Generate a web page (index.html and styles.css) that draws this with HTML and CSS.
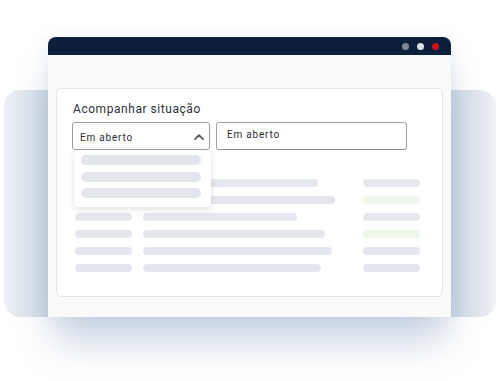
FILE: index.html
```html
<!DOCTYPE html>
<html lang="pt">
<head>
<meta charset="utf-8">
<title>Acompanhar situação</title>
<link rel="stylesheet" href="styles.css">
</head>
<body>
<div class="scene">
  <div class="window">
    <div class="titlebar">
      <span class="dot dot-gray"></span>
      <span class="dot dot-light"></span>
      <span class="dot dot-red"></span>
    </div>
    <div class="window-body">
      <div class="card">
        <div class="card-title">Acompanhar situação</div>
        <div class="filters">
          <div class="select">
            <span class="select-text">Em aberto</span>
            <svg class="chevron" width="10" height="6" viewBox="0 0 10 6"><polyline points="1,5.2 5,1.2 9,5.2" fill="none" stroke="#555" stroke-width="1.7" stroke-linecap="round" stroke-linejoin="round"/></svg>
            <div class="dropdown">
              <div class="dd-bar"></div>
              <div class="dd-bar"></div>
              <div class="dd-bar"></div>
            </div>
          </div>
          <div class="input">Em aberto</div>
        </div>
        <div class="table">
          <div class="row"><span class="bar left"></span><span class="mid"><span class="bar" style="width:175px"></span></span><span class="bar right"></span></div>
          <div class="row"><span class="bar left"></span><span class="mid"><span class="bar" style="width:192px"></span></span><span class="bar right green"></span></div>
          <div class="row"><span class="bar left"></span><span class="mid"><span class="bar" style="width:154px"></span></span><span class="bar right"></span></div>
          <div class="row"><span class="bar left"></span><span class="mid"><span class="bar" style="width:182px"></span></span><span class="bar right green"></span></div>
          <div class="row"><span class="bar left"></span><span class="mid"><span class="bar" style="width:189px"></span></span><span class="bar right"></span></div>
          <div class="row"><span class="bar left"></span><span class="mid"><span class="bar" style="width:178px"></span></span><span class="bar right"></span></div>
        </div>
      </div>
    </div>
  </div>
</div>
</body>
</html>
```

FILE: styles.css
```css
* { box-sizing: border-box; }
html, body {
  margin: 0;
  padding: 0;
  background: #ffffff;
  font-family: Roboto, "Liberation Sans", sans-serif;
}
.scene {
  position: relative;
  width: 504px;
  height: 381px;
  padding-top: 37px;
  overflow: hidden;
}
.scene::before {
  content: "";
  position: absolute;
  left: 4px;
  top: 90px;
  width: 492px;
  height: 227px;
  border-radius: 16px;
  background: linear-gradient(to right, #eef1f5 0%, #d0dae5 9%, #d0dae5 91%, #eef1f5 100%);
}
.window {
  position: relative;
  margin-left: 48px;
  width: 403px;
  height: 280px;
  border-radius: 8px 8px 0 0;
  box-shadow: 0 30px 38px -6px rgba(110, 140, 178, 0.38), 0 0 18px rgba(150, 170, 200, 0.18);
  background: #f9fafa;
}
.titlebar {
  height: 18px;
  background: #0c1f3b;
  border-radius: 8px 8px 0 0;
  display: flex;
  align-items: center;
  justify-content: flex-end;
  gap: 8px;
  padding-right: 12px;
  padding-top: 1px;
}
.dot {
  width: 7px;
  height: 7px;
  border-radius: 50%;
}
.dot-gray { background: #7d8796; }
.dot-light { background: #dde2e9; }
.dot-red { background: #c8151b; }
.window-body {
  height: 262px;
  padding: 33px 8px 0 8px;
}
.card {
  height: 209px;
  background: #ffffff;
  border: 1px solid #e6e7e8;
  border-radius: 5px;
  padding: 13px 15px 0 15px;
}
.card-title {
  padding-left: 1px;
  font-size: 12px;
  line-height: 14px;
  letter-spacing: 0.55px;
  color: #2f3337;
}
.filters {
  margin-top: 6px;
  display: flex;
  gap: 6px;
}
.select {
  position: relative;
  width: 138px;
  height: 28px;
  border: 1px solid #9c9c9c;
  border-radius: 3px;
  display: flex;
  justify-content: space-between;
  padding: 8px 5px 0 7px;
}
.select-text, .input {
  font-size: 10px;
  line-height: 14px;
  letter-spacing: 0.8px;
  color: #2b2f33;
}
.chevron {
  margin-top: 3px;
}
.input {
  width: 191px;
  height: 28px;
  border: 1px solid #a3a3a3;
  border-bottom-color: #8f8f8f;
  border-radius: 3px;
  padding: 5px 10px 0 10px;
}
.dropdown {
  position: absolute;
  left: 1px;
  top: 27px;
  width: 137px;
  height: 57px;
  background: #ffffff;
  border-radius: 4px;
  box-shadow: 0 2px 6px rgba(60, 60, 70, 0.16);
  padding: 5px 8px 0 7px;
  display: flex;
  flex-direction: column;
  gap: 6.5px;
  z-index: 2;
}
.dd-bar {
  width: 120px;
  height: 10px;
  border-radius: 5px;
  background: #e4e6ed;
}
.table {
  margin-top: 29px;
  padding-left: 3px;
  display: flex;
  flex-direction: column;
  gap: 9px;
}
.row {
  display: flex;
  height: 8px;
  gap: 11px;
}
.mid {
  width: 209px;
  display: flex;
}
.bar {
  display: block;
  height: 8px;
  border-radius: 4px;
  background: #e4e7ee;
}
.left, .right { width: 57px; }
.green { background: #edf8ea; }
```
